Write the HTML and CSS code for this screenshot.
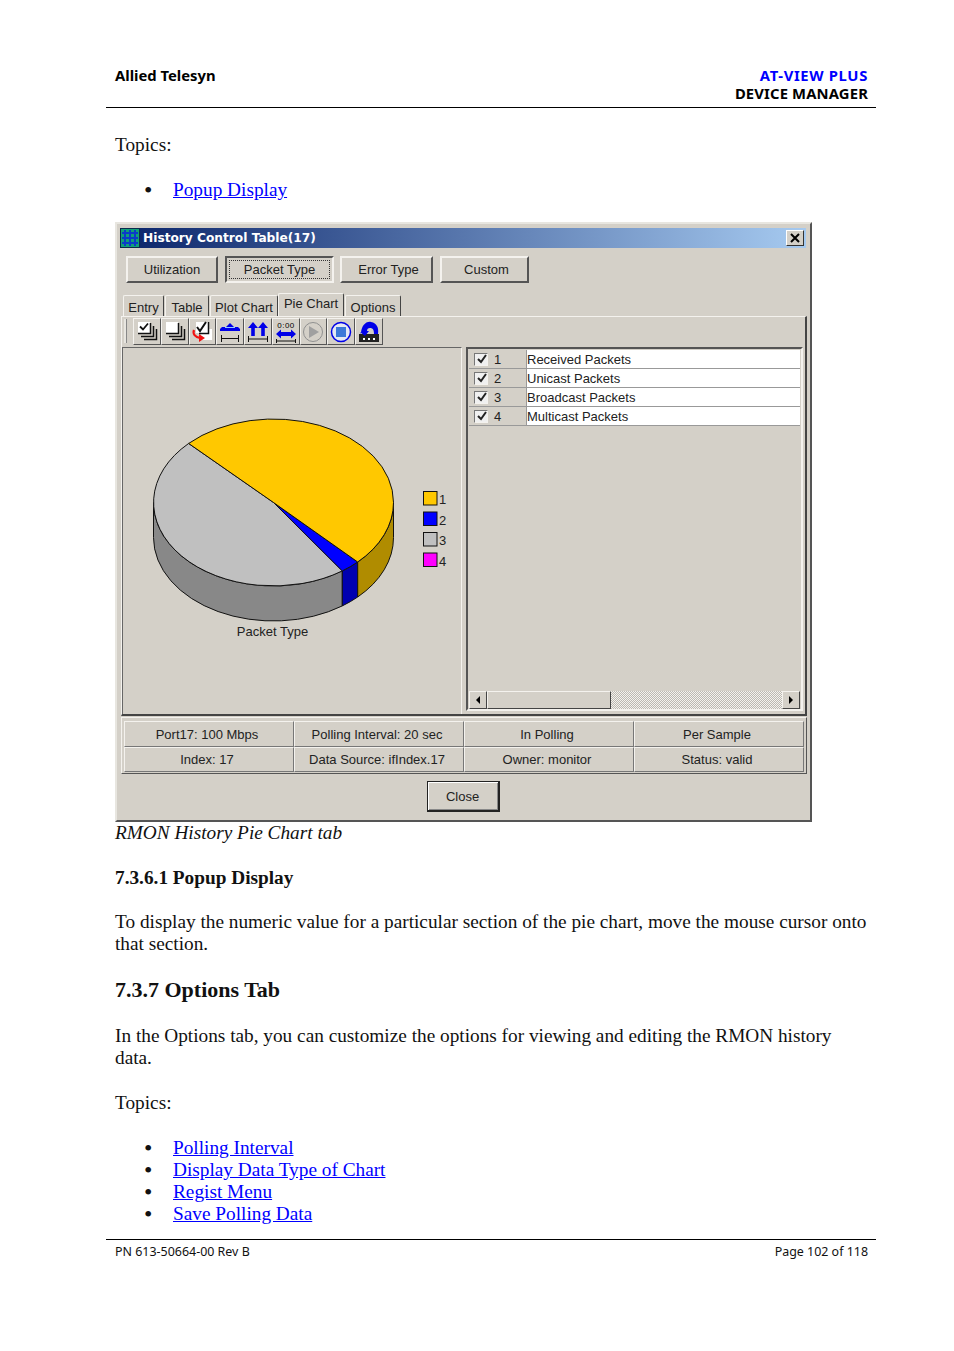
FILE: index.html
```html
<!DOCTYPE html>
<html lang="en">
<head>
<meta charset="utf-8">
<title>RMON History Pie Chart tab</title>
<link rel="stylesheet" href="styles.css">
</head>
<body>
<div class="page">
  <header class="head">
    <div class="brand">Allied Telesyn</div>
    <div class="product"><div class="blue">AT-VIEW PLUS</div><div class="dm">DEVICE MANAGER</div></div>
  </header>
  <main class="content">
    <p class="p t1">Topics:</p>
    <ul class="links l1"><li><a href="#">Popup Display</a></li></ul>

    <section class="dialog">
      <div class="titlebar">
        <svg class="appicon" viewBox="0 0 20 20" width="20" height="20"><rect width="20" height="20" fill="#0b2a4e"/><path d="M1 1h18v18H1z" fill="#10a078"/><path d="M2 5h16M2 10h16M2 15h16M5 2v16M10 2v16M15 2v16" stroke="#0a3cc8" stroke-width="2"/></svg>
        <span class="title">History Control Table(17)</span>
        <span class="closex"><svg viewBox="0 0 10 10" width="10" height="10"><path d="M1 1l8 8M9 1l-8 8" stroke="#000" stroke-width="2"/></svg></span>
      </div>
      <div class="modes">
        <button class="btn m1">Utilization</button>
        <button class="btn m2 current"><span class="focus">Packet Type</span></button>
        <button class="btn m3">Error Type</button>
        <button class="btn m4">Custom</button>
      </div>
      <div class="tabs">
        <span class="tab w1">Entry</span><span class="tab w2">Table</span><span class="tab w3">Plot Chart</span><span class="tab w4 active">Pie Chart</span><span class="tab w5">Options</span>
      </div>
      <div class="tabpanel">
        <div class="toolbar">
          <span class="grip"></span>
          <span class="tool"><svg viewBox="0 0 24 24" width="24" height="24"><path d="M3 2h12v11H3z" fill="#fff"/><path d="M15.500 3v10.500H3M18.500 6v10.500H6M21.500 9v10.500H9" fill="none" stroke="#111" stroke-width="1.500"/><path d="M5 6.500l3 3 5-6" fill="none" stroke="#111" stroke-width="1.800"/></svg></span>
          <span class="tool"><svg viewBox="0 0 24 24" width="24" height="24"><path d="M3 2h12v11H3z" fill="#fff"/><path d="M15.500 3v10.500H3M18.500 6v10.500H6M21.500 9v10.500H9" fill="none" stroke="#111" stroke-width="1.500"/></svg></span>
          <span class="tool"><svg viewBox="0 0 24 24" width="24" height="24"><path d="M11 9h11v11H11z" fill="#fff"/><path d="M6 2h12v11H6z" fill="#fff"/><path d="M18.500 2v11.500H9" fill="none" stroke="#111" stroke-width="1.500"/><path d="M7 7l3 4 6-9" fill="none" stroke="#111" stroke-width="2"/><path d="M4 10c-1.500 4 1 7 6 8" fill="none" stroke="#f01010" stroke-width="2.200"/><path d="M9 14l6 4-6 4z" fill="#f01010"/></svg></span>
          <span class="tool"><svg viewBox="0 0 24 24" width="24" height="24"><path d="M12 3l4 4h4l2 2v2H2V9l2-2h4z" fill="#0000e8"/><path d="M7 7.500h10" stroke="#9cf" stroke-width="1"/><path d="M3.500 15v7M20.500 15v7M4 18.500h16" stroke="#111" fill="none"/></svg></span>
          <span class="tool"><svg viewBox="0 0 24 24" width="24" height="24"><path d="M7 2l5 6H8.800v8H5.200V8H2zM17 2l5 6h-3.200v8h-3.600V8H12z" fill="#0000e8"/><path d="M2.500 16v6M21.500 16v6M3 19h18" stroke="#111" fill="none"/></svg></span>
          <span class="tool"><svg viewBox="0 0 24 24" width="24" height="24"><text x="12" y="7.500" class="clock">0:00</text><path d="M2 14l5-4.500v2.500h10V9.500l5 4.500-5 4.500V16H7v2.500z" fill="#0000e8"/><path d="M2.500 19v4M21.500 19v4M3 21h18" stroke="#111" fill="none"/></svg></span>
          <span class="tool"><svg viewBox="0 0 24 24" width="24" height="24"><circle cx="12" cy="12" r="9.500" fill="#d4d0c8" stroke="#909090"/><path d="M8 6l10 6-10 6z" fill="#a0a0a0"/></svg></span>
          <span class="tool"><svg viewBox="0 0 24 24" width="24" height="24"><circle cx="12" cy="12" r="9.500" fill="#e4e8f4" stroke="#0000e8" stroke-width="1.500"/><rect x="7" y="7" width="10" height="10" fill="#3c78d8"/></svg></span>
          <span class="tool"><svg viewBox="0 0 24 24" width="24" height="24"><path d="M2 14h20v8H2z" fill="#222"/><path d="M6 18h2v2H6zM11 18h2v2h-2zM16 18h2v2h-2z" fill="#fff"/><path d="M4 14C4 6 9 1 14 2c6 1 8 6 7 12h-4c0-4-1-6-4-6-2 0-3 1-3 3h2l-4 5-5-4z" fill="#0000e8"/></svg></span>
        </div>
        <div class="split">
          <div class="chartpane">
            <svg class="chart" viewBox="123 348 338 366" width="338" height="366">
              <g stroke="#111" stroke-width="1">
                <path d="M153.500 502.500A120 83.500 0 0 0 342.300 570.900V605.900A120 83.500 0 0 1 153.500 537.500Z" fill="#888"/>
                <path d="M342.300 570.900A120 83.500 0 0 0 357.700 562V597A120 83.500 0 0 1 342.300 605.900Z" fill="#0000b0"/>
                <path d="M357.700 562A120 83.500 0 0 0 393.500 502.500V537.500A120 83.500 0 0 1 357.700 597Z" fill="#b08c00"/>
                <path d="M273.500 502.500L342.300 570.900A120 83.500 0 0 1 188.650 443.460Z" fill="#c0c0c0"/>
                <path d="M273.500 502.500L357.700 562A120 83.500 0 0 1 342.300 570.900Z" fill="#0000ff"/>
                <path d="M273.500 502.500L188.650 443.460A120 83.500 0 0 1 393.500 502.500A120 83.500 0 0 1 357.700 562Z" fill="#ffc800"/>
                <rect x="423.500" y="491.500" width="13.500" height="13.500" fill="#ffc800"/>
                <rect x="423.500" y="512" width="13.500" height="13.500" fill="#0000ff"/>
                <rect x="423.500" y="532.500" width="13.500" height="13.500" fill="#c0c0c0"/>
                <rect x="423.500" y="553" width="13.500" height="13.500" fill="#ff00ff"/>
              </g>
              <g class="charttext">
                <text x="439" y="504">1</text><text x="439" y="525">2</text><text x="439" y="545">3</text><text x="439" y="566">4</text>
                <text x="272.500" y="636" text-anchor="middle">Packet Type</text>
              </g>
            </svg>
          </div>
          <div class="listpane">
            <div class="rows">
              <div class="row"><span class="rowhead"><i class="check"><svg viewBox="0 0 11 11" width="11" height="11"><path d="M2 5l3 3 5-7" fill="none" stroke="#222" stroke-width="2"/></svg></i>1</span><span class="rowtext">Received Packets</span></div>
              <div class="row"><span class="rowhead"><i class="check"><svg viewBox="0 0 11 11" width="11" height="11"><path d="M2 5l3 3 5-7" fill="none" stroke="#222" stroke-width="2"/></svg></i>2</span><span class="rowtext">Unicast Packets</span></div>
              <div class="row"><span class="rowhead"><i class="check"><svg viewBox="0 0 11 11" width="11" height="11"><path d="M2 5l3 3 5-7" fill="none" stroke="#222" stroke-width="2"/></svg></i>3</span><span class="rowtext">Broadcast Packets</span></div>
              <div class="row"><span class="rowhead"><i class="check"><svg viewBox="0 0 11 11" width="11" height="11"><path d="M2 5l3 3 5-7" fill="none" stroke="#222" stroke-width="2"/></svg></i>4</span><span class="rowtext">Multicast Packets</span></div>
            </div>
            <div class="scrollbar">
              <span class="arrow"><svg viewBox="0 0 6 8" width="6" height="8"><path d="M5 0v8L1 4z" fill="#000"/></svg></span>
              <span class="thumb"></span>
              <span class="track"></span>
              <span class="arrow"><svg viewBox="0 0 6 8" width="6" height="8"><path d="M1 0v8l4-4z" fill="#000"/></svg></span>
            </div>
          </div>
        </div>
      </div>
      <div class="status">
        <span class="cell">Port17: 100 Mbps</span><span class="cell">Polling Interval: 20 sec</span><span class="cell">In Polling</span><span class="cell">Per Sample</span>
        <span class="cell">Index: 17</span><span class="cell">Data Source: ifIndex.17</span><span class="cell">Owner: monitor</span><span class="cell">Status: valid</span>
      </div>
      <div class="closerow"><button class="btn closebtn">Close</button></div>
    </section>

    <p class="p caption">RMON History Pie Chart tab</p>
    <h4 class="p h4">7.3.6.1 Popup Display</h4>
    <p class="p b1">To display the numeric value for a particular section of the pie chart, move the mouse cursor onto that section.</p>
    <h3 class="h3">7.3.7 Options Tab</h3>
    <p class="p b2">In the Options tab, you can customize the options for viewing and editing the RMON history data.</p>
    <p class="p t2">Topics:</p>
    <ul class="links l2">
      <li><a href="#">Polling Interval</a></li>
      <li><a href="#">Display Data Type of Chart</a></li>
      <li><a href="#">Regist Menu</a></li>
      <li><a href="#">Save Polling Data</a></li>
    </ul>
  </main>
  <footer class="foot"><span>PN 613-50664-00 Rev B</span><span>Page 102 of 118</span></footer>
</div>
</body>
</html>
```
FILE: styles.css
```css
* { box-sizing: border-box; }
html, body { margin: 0; background: #fff; }
.page { width: 770px; margin-left: 106px; padding-top: 66px; font-family: "Liberation Serif", serif; color: #111; }
.head { display: flex; justify-content: space-between; align-items: flex-start; padding: 0 8px 5px 9px; border-bottom: 1px solid #000; font: 700 14.800px/18px "Noto Sans", sans-serif; color: #000; }
.product { text-align: right; }
.blue { color: #0000ff; letter-spacing: .65px; }
.dm { letter-spacing: .15px; }
.content { padding: 0 8px 0 9px; }
.p { margin: 0; font-size: 19.300px; line-height: 22px; font-weight: 400; }
.t1 { margin-top: 26px; }
.links { margin: 0; padding: 0 0 0 29px; font-size: 19.300px; line-height: 22px; list-style: none; }
.links li { display: flex; }
.links li::before { content: "\2022"; width: 29px; flex: none; font-size: 24px; }
.links a { color: #0000ff; text-decoration: underline; }
.l1 { margin-top: 23px; }

.dialog { width: 697px; height: 600px; margin-top: 21px; background: #d4d0c8; border: 2px solid; border-color: #e8e6e0 #555 #555 #e8e6e0; padding: 4px 4px 0 3px; display: flex; flex-direction: column; font: 13px "Liberation Sans", sans-serif; color: #222; }
.titlebar { height: 20px; flex: none; display: flex; align-items: center; background: linear-gradient(90deg, #0a246a, #a6caf0); }
.appicon { flex: none; margin-right: 3px; }
.title { flex: 1; font: 700 12.200px "DejaVu Sans", sans-serif; color: #fff; margin-top: -1px; }
.closex { width: 18px; height: 16px; margin-right: 2px; display: flex; align-items: center; justify-content: center; background: #d4d0c8; border: 1px solid; border-color: #fff #333 #333 #fff; }
.btn { padding: 0; font: inherit; color: inherit; background: #d4d0c8; border: 2px solid; border-color: #f4f2ee #555 #555 #f4f2ee; }
.modes { flex: none; height: 27px; margin: 8px 0 0 6px; display: flex; }
.m1 { width: 92px; margin-right: 7px; }
.m2 { width: 109px; margin-right: 6px; }
.m3 { width: 93px; margin-right: 7px; padding-left: 4px; }
.m4 { width: 89px; padding-left: 4px; }
.current { border-color: #555 #f4f2ee #f4f2ee #555; padding: 2px; }
.focus { display: flex; height: 100%; align-items: center; justify-content: center; border: 1px dotted #333; }
.tabs { flex: none; height: 23px; margin: 10px 0 0 3px; display: flex; align-items: flex-end; }
.tab { height: 21px; margin-right: 1px; display: flex; align-items: center; justify-content: center; padding-top: 2px; border: 1px solid; border-color: #f4f2ee #444 transparent #f4f2ee; border-bottom: 0; border-radius: 2px 2px 0 0; }
.w1 { width: 41px; } .w2 { width: 44px; } .w3 { width: 68px; margin-right: 0; } .w4 { width: 66px; } .w5 { width: 56px; }
.active { height: 23px; padding: 0 0 3px; }
.tabpanel { flex: none; height: 400px; margin: 0 0 0 1px; width: 686px; border: 1px solid; border-color: #f4f2ee #444 #444 #f4f2ee; border-width: 1px 2px 2px 1px; display: flex; flex-direction: column; }
.toolbar { flex: none; height: 30px; display: flex; align-items: flex-start; padding: 1px 0 0 2px; }
.grip { width: 3px; height: 24px; margin: 1px 6px 0 0; background: #e8e6e0; border-right: 1px solid #888; }
.tool { width: 27.750px; height: 27px; flex: none; display: flex; align-items: center; justify-content: center; border: 1px solid; border-color: #f4f2ee #555 #555 #f4f2ee; }
.clock { font: 8px "Liberation Sans", sans-serif; text-anchor: middle; fill: #000; letter-spacing: .5px; }
.split { flex: 1; display: flex; min-height: 0; }
.chartpane { width: 340px; flex: none; border: 1px solid; border-color: #666 #f4f2ee #f4f2ee #666; border-width: 1px 1px 0 1px; }
.chart { display: block; }
.charttext { font: 13px "Liberation Sans", sans-serif; fill: #222; }
.listpane { width: 337px; flex: none; margin: 0 0 3px 4px; border: 2px solid; border-color: #555 #f4f2ee #f4f2ee #555; padding: 1px 1px 0 1px; display: flex; flex-direction: column; }
.rows { flex: 1; }
.row { height: 19.100px; display: flex; border-bottom: 1px solid #999; }
.rowhead { width: 57px; flex: none; display: flex; align-items: center; gap: 6px; padding-left: 5px; }
.check { width: 14px; height: 13px; flex: none; display: flex; align-items: center; justify-content: center; background: #f0f0f0; border: 1px solid; border-color: #777 #f4f2ee #f4f2ee #777; }
.rowtext { flex: 1; display: flex; align-items: center; padding-top: 1px; background: #fff; border-left: 1px solid #999; }
.scrollbar { flex: none; height: 18px; display: flex; }
.arrow { width: 18px; display: flex; align-items: center; justify-content: center; border: 1px solid; border-color: #f4f2ee #444 #444 #f4f2ee; }
.thumb { width: 124px; border: 1px solid; border-color: #f4f2ee #444 #444 #f4f2ee; }
.track { flex: 1; background: repeating-conic-gradient(#bcb9b2 0 25%, #f4f2ee 0 50%) 0 0 / 2px 2px; }
.status { flex: none; width: 686px; height: 57px; margin: 1px 0 0 1px; padding: 3px 2px 2px 2px; display: grid; grid-template-columns: 170px 170px 170px 170px; grid-template-rows: 26px 25px; border: 1px solid; border-color: #f4f2ee #555 #555 #f4f2ee; }
.cell { display: flex; align-items: center; justify-content: center; padding-right: 4px; border: 1px solid; border-color: #f4f2ee #777 #777 #f4f2ee; }
.closerow { flex: 1; display: flex; justify-content: center; padding-top: 7px; }
.closebtn { width: 73px; height: 31px; border-color: #222; border-style: solid; border-width: 1px 2px 2px 1px; box-shadow: inset 1px 1px #fff, inset -1px -1px #888; }

.caption { margin-top: 0; font-style: italic; }
.h4 { margin-top: 23px; font-weight: 700; }
.b1 { margin-top: 22px; }
.h3 { margin: 24px 0 0; font-size: 22px; line-height: 22px; font-weight: 700; }
.b2 { margin-top: 24px; }
.t2 { margin-top: 23px; }
.l2 { margin-top: 23px; }
.foot { display: flex; justify-content: space-between; margin-top: 14px; padding: 5px 8px 0 9px; border-top: 1px solid #000; font: 12.450px/14px "Noto Sans", sans-serif; color: #111; }
```
